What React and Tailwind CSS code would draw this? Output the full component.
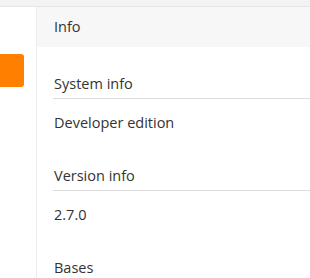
import React from "react";

const sections = [
  { title: "System info", value: "Developer edition" },
  { title: "Version info", value: "2.7.0" },
];

export default function App() {
  return (
    <div
      className="w-[310px] h-[278px] overflow-hidden flex flex-col bg-white text-[#333]"
      style={{ fontFamily: '"Open Sans", "Noto Sans", sans-serif' }}
    >
      <div className="h-[7px] shrink-0 bg-[#f3f3f3] border-b border-[#e5e5e5]" />
      <div className="flex flex-1 min-h-0">
        <aside className="w-[37px] shrink-0 border-r border-[#ebebeb] pt-[47px]">
          <div className="w-[24px] h-[33px] bg-[#ff8000] rounded-r-[3px]" />
        </aside>
        <main className="flex-1 min-w-0">
          <div className="h-[40px] bg-[#f7f7f7] flex items-center px-[17px] text-[14.5px]">
            Info
          </div>
          <div className="pl-[16px] pt-[3px]">
            {sections.map((s) => (
              <div key={s.title} className="pt-[24px] pb-[9px]">
                <div className="text-[14.5px] leading-[20px] pb-[4px] pl-[1px] border-b border-[#dcdcdc]">
                  {s.title}
                </div>
                <div className="text-[14.5px] leading-[20px] pt-[14px] pl-[1px]">
                  {s.value}
                </div>
              </div>
            ))}
            <div className="pt-[24px] text-[14.5px] leading-[20px] pl-[1px]">
              Bases
            </div>
          </div>
        </main>
      </div>
    </div>
  );
}
